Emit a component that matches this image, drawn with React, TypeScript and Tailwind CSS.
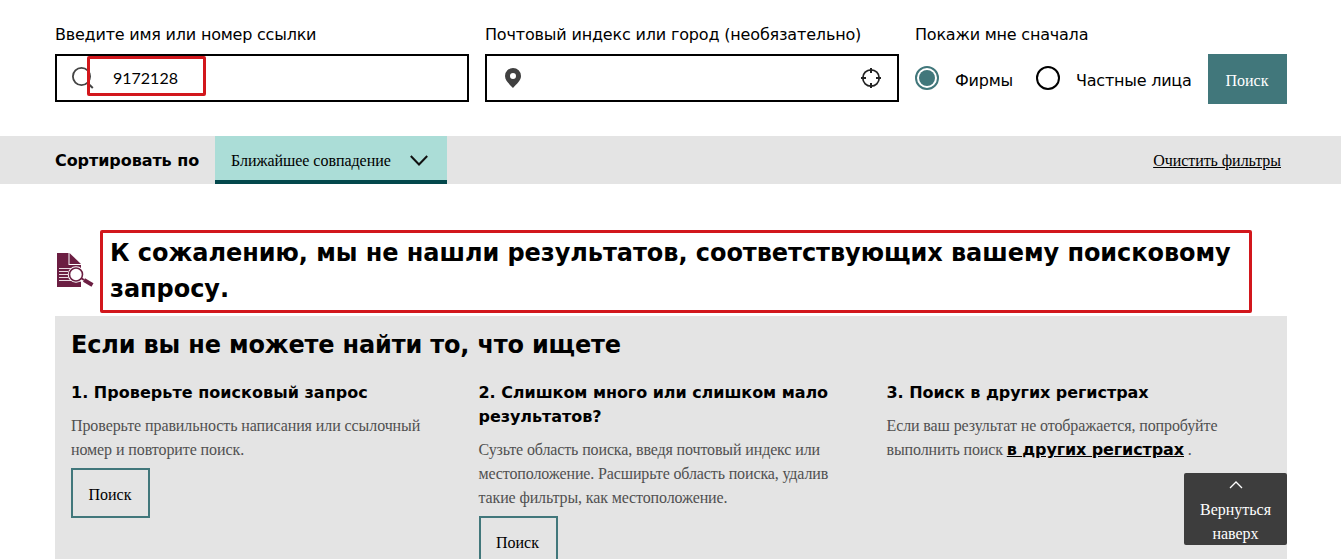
const sans = "font-['DejaVu_Sans',Verdana,sans-serif]"
const serif = "font-['Liberation_Serif',serif]"

function SearchBar() {
  return (
    <form className="flex pl-[55px] pr-[54px] pt-[22px] h-[136px] gap-4">
      <div className="w-[414px] shrink-0">
        <label htmlFor="name" className="block h-6 pt-px text-base leading-6 tracking-[-0.21px]">
          <span className="whitespace-nowrap">Введите имя или номер ссылки</span>
        </label>
        <div className="relative mt-2 h-12 border-2 border-black">
          <svg className="absolute left-[15px] top-[10px]" width="22" height="24" viewBox="0 0 22 24" fill="none" stroke="#444" strokeWidth="1.8">
            <circle cx="9.5" cy="10.5" r="8.6" />
            <path d="M15.5 17l5.3 5" strokeWidth="2" />
          </svg>
          <input
            id="name"
            type="text"
            defaultValue="9172128"
            className="h-full w-full pl-[56px] pb-[1px] font-['Lato',sans-serif] text-base outline-none"
          />
          <div className="absolute left-[30px] top-0 h-10 w-[119px] rounded-xs border-3 border-[#d2171c]" />
        </div>
      </div>
      <div className="w-[414px] shrink-0">
        <label htmlFor="place" className="block h-6 pt-px text-base leading-6 tracking-[-0.17px]">
          <span className="whitespace-nowrap">Почтовый индекс или город (необязательно)</span>
        </label>
        <div className="mt-2 flex h-12 items-center justify-between border-2 border-black pr-4 pl-[18px]">
          <svg width="16" height="20" viewBox="0 0 16 20" fill="#404040">
            <path fillRule="evenodd" d="M8 0a8 8 0 0 0-8 8c0 4.700 4.500 8 8 12 3.500-4 8-7.300 8-12a8 8 0 0 0-8-8zm0 5a3 3 0 1 1 0 6 3 3 0 0 1 0-6z" />
          </svg>
          <input id="place" type="text" className="h-full flex-1 px-4 outline-none" />
          <svg width="20" height="20" viewBox="0 0 20 20" fill="none" stroke="#222" strokeWidth="2">
            <circle cx="10" cy="10" r="8.200" strokeWidth="1.700" />
            <path d="M10 0v5M10 15v5M0 10h5M15 10h5" />
          </svg>
        </div>
      </div>
      <div className="w-[277px] shrink-0">
        <span className="block h-6 pt-px text-base leading-6 tracking-[-0.21px] whitespace-nowrap">Покажи мне сначала</span>
        <div className="mt-2 flex h-12 items-center tracking-[-0.22px]">
          <span className="flex size-6 items-center justify-center rounded-full border-2 border-[#41777b]">
            <span className="size-4 rounded-full bg-[#41777b]" />
          </span>
          <span className="ml-4 mt-1.5 w-[81px] whitespace-nowrap">Фирмы</span>
          <span className="size-6 rounded-full border-2 border-black" />
          <span className="ml-4 mt-1.5 whitespace-nowrap">Частные лица</span>
        </div>
      </div>
      <button type="button" className={`mt-8 h-[50px] w-[79px] shrink-0 bg-[#41777b] pt-1 pr-px text-white ${serif}`}>
        Поиск
      </button>
    </form>
  )
}

function SortBar() {
  return (
    <div className="flex h-12 items-center bg-[#e4e4e4] pr-[60px] pl-[55px]">
      <span className="w-40 pt-px font-bold tracking-[-0.07px] whitespace-nowrap">Сортировать по</span>
      <div className={`flex h-12 w-[232px] items-center border-b-4 border-[#03484c] bg-[#abddd7] pl-4 ${serif}`}>
        <span className="w-[179px] pt-1.5 text-base tracking-[-0.04px] whitespace-nowrap">Ближайшее совпадение</span>
        <svg className="mt-1" width="18" height="11" viewBox="0 0 18 11" fill="none" stroke="#111" strokeWidth="2">
          <path d="M.8 1L9 9.500 17.200 1" />
        </svg>
      </div>
      <a className={`ml-auto pt-0.5 tracking-[-0.05px] underline whitespace-nowrap ${serif}`}>Очистить фильтры</a>
    </div>
  )
}

function NoResults() {
  return (
    <div className="flex px-[55px] pt-[46px]">
      <svg className="mt-[23px] mr-[6px]" width="39" height="35" viewBox="0 0 39 35">
        <path fill="#6b1e42" d="M2 0h11.500v12H26v22H2z" />
        <path fill="#6b1e42" d="M14.500 0L26 11H14.500z" />
        <path stroke="#e9dbe2" d="M4 15.500h12M4 18.500h9M4 21.500h9M4 24.500h9M4 27.500h12" />
        <path stroke="#fff" strokeWidth="5" d="M26 26l10 7" />
        <circle cx="21" cy="21.500" r="8.300" fill="#fff" />
        <circle cx="21" cy="21.500" r="6.500" fill="#fff" stroke="#6b1e42" strokeWidth="1.600" />
        <path stroke="#6b1e42" strokeWidth="2" d="M26 25l3 2" />
        <path stroke="#6b1e42" strokeWidth="4" d="M29 27l8.500 5" />
      </svg>
      <h2 className="h-[83px] w-[1152px] rounded-xs border-3 border-[#d2171c] pt-[2px] pl-[7px] text-2xl leading-9 font-bold tracking-[-0.05px]">
        <span className="block whitespace-nowrap">К сожалению, мы не нашли результатов, соответствующих вашему поисковому</span>
        <span className="block">запросу.</span>
      </h2>
    </div>
  )
}

const searchButton = `mt-1.5 h-[50px] w-[79px] border-2 border-[#41777b] pt-1 pr-px text-base text-black ${serif}`
const tipText = `mt-2 pt-px leading-6 text-[#505050] whitespace-nowrap ${serif}`

function Tips() {
  return (
    <div className="ml-[55px] mr-[54px] mt-[3px] h-[260px] bg-[#e4e4e4] px-4 pt-[11px]">
      <h2 className="text-2xl leading-9 font-bold tracking-[-0.17px]">Если вы не можете найти то, что ищете</h2>
      <div className="mt-[18px] flex">
        <div className="w-[407.500px] shrink-0">
          <h3 className="font-bold leading-6 tracking-[0.03px] whitespace-nowrap">1. Проверьте поисковый запрос</h3>
          <p className={`tracking-[-0.09px] ${tipText}`}>
            Проверьте правильность написания или ссылочный<br />
            номер и повторите поиск.
          </p>
          <button type="button" className={searchButton}>Поиск</button>
        </div>
        <div className="w-[408px] shrink-0">
          <h3 className="font-bold leading-6 tracking-[-0.05px] whitespace-nowrap">
            2. Слишком много или слишком мало<br />
            результатов?
          </h3>
          <p className={`tracking-[-0.13px] ${tipText}`}>
            Сузьте область поиска, введя почтовый индекс или<br />
            местоположение. Расширьте область поиска, удалив<br />
            такие фильтры, как местоположение.
          </p>
          <button type="button" className={searchButton}>Поиск</button>
        </div>
        <div>
          <h3 className="font-bold leading-6 tracking-[-0.05px] whitespace-nowrap">3. Поиск в других регистрах</h3>
          <p className={`tracking-[-0.11px] ${tipText}`}>
            Если ваш результат не отображается, попробуйте<br />
            выполнить поиск <a className={`font-bold text-black underline ${sans}`}>в других регистрах</a> .
          </p>
        </div>
      </div>
    </div>
  )
}

export default function App() {
  return (
    <div className={`relative h-[559px] w-[1341px] overflow-hidden bg-white text-base text-black ${sans}`}>
      <SearchBar />
      <SortBar />
      <NoResults />
      <Tips />
      <a className={`absolute top-[473px] left-[1184px] flex h-[72px] w-[103px] flex-col items-center rounded-xs bg-[#3d3d3d] pt-2 text-center leading-6 text-white ${serif}`}>
        <svg className="shrink-0" width="14" height="8" viewBox="0 0 14 8" fill="none" stroke="#fff" strokeWidth="1.300">
          <path d="M1 7l6-6 6 6" />
        </svg>
        <span className="mt-[9px] shrink-0">Вернуться<br />наверх</span>
      </a>
    </div>
  )
}
